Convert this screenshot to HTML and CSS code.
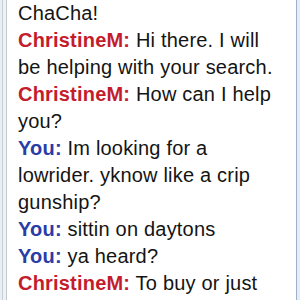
FILE: index.html
```
<!DOCTYPE html>
<html>
<head>
<meta charset="utf-8">
<link rel="stylesheet" href="styles.css">
</head>
<body>
<div class="frame">
  <div class="edge-left"></div>
  <div class="chat">
    <p class="msg">ChaCha!</p>
    <p class="msg"><span class="agent">ChristineM:</span> Hi there. I will be helping with your search.</p>
    <p class="msg"><span class="agent">ChristineM:</span> How can I help you?</p>
    <p class="msg"><span class="you">You:</span> Im looking for a lowrider. yknow like a crip gunship?</p>
    <p class="msg"><span class="you">You:</span> sittin on daytons</p>
    <p class="msg"><span class="you">You:</span> ya heard?</p>
    <p class="msg"><span class="agent">ChristineM:</span> To buy or just</p>
  </div>
  <div class="edge-right"></div>
</div>
</body>
</html>
```
FILE: styles.css
```
html, body {
  margin: 0;
  padding: 0;
  background: #fff;
}
body {
  width: 300px;
  height: 300px;
  overflow: hidden;
}
.frame {
  display: flex;
  height: 300px;
}
.edge-left {
  width: 6px;
  flex: none;
  background: linear-gradient(to right, #eaeff4 0 2px, #c6ced6 2px 3px, #eef2f6 3px 6px);
  border-right: 1px solid #c4c9cf;
}
.chat {
  flex: 1;
  min-width: 0;
  padding: 0 14px 0 11px;
  font-family: "Liberation Sans", Arial, sans-serif;
  font-size: 20px;
  line-height: 27px;
  letter-spacing: 0.2px;
  color: #141414;
}
.msg {
  margin: 0;
}
.agent {
  color: #c41c2c;
  font-weight: bold;
}
.you {
  color: #2a3ca6;
  font-weight: bold;
}
.edge-right {
  width: 3px;
  flex: none;
  border-left: 1px solid #9fb2cc;
  background: #e4ecf5;
}
```
